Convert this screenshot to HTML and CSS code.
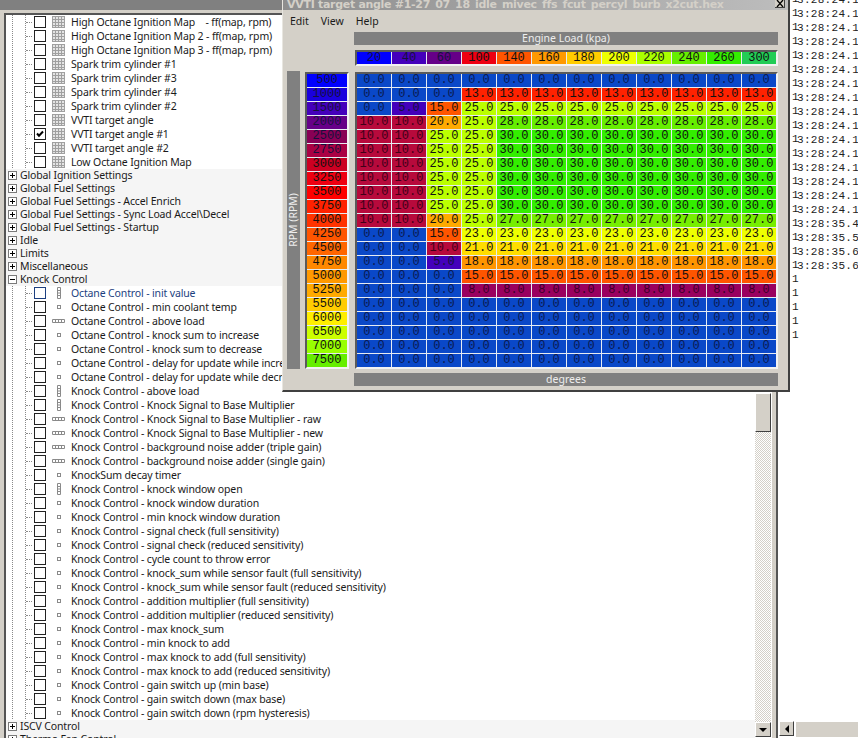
FILE: index.html
```html
<!DOCTYPE html>
<html lang="en">
<head>
<meta charset="utf-8">
<title>VVTI target angle</title>
<link rel="stylesheet" href="styles.css">
</head>
<body>
<svg class="defs" width="0" height="0">
  <symbol id="grid" viewBox="0 0 13 12"><rect width="13" height="12" fill="#e4e4e4"/><path d="M0 .5H13M0 3.5H13M0 6.5H13M0 9.5H13M0 11.5H13M.5 0V12M3.5 0V12M6.5 0V12M9.5 0V12M12.5 0V12" stroke="#a0a0a0" fill="none"/></symbol>
  <symbol id="one" viewBox="0 0 13 12"><rect x="5.5" y="4.5" width="3" height="3" fill="#fff" stroke="#8a8a8a"/></symbol>
  <symbol id="ver" viewBox="0 0 13 12"><path d="M5.5 .5h3v11h-3zM5.5 3.5h3M5.5 6h3M5.5 8.5h3" fill="#fff" stroke="#8a8a8a"/></symbol>
  <symbol id="hor" viewBox="0 0 13 12"><path d="M.5 4.5h12v3H.5zM3.5 4.5v3M6.5 4.5v3M9.5 4.5v3" fill="#fff" stroke="#8a8a8a"/></symbol>
  <symbol id="plus" viewBox="0 0 9 9"><rect x=".5" y=".5" width="8" height="8" fill="#fff" stroke="#7a7a7a"/><path d="M2 4.5h5M4.5 2v5" stroke="#000"/></symbol>
  <symbol id="minus" viewBox="0 0 9 9"><rect x=".5" y=".5" width="8" height="8" fill="#fff" stroke="#7a7a7a"/><path d="M2 4.5h5" stroke="#000"/></symbol>
</svg>

<div class="app">
  <section class="left">
    <div class="left-head"></div>
    <div class="left-body">
      <ul class="tree">
        <li class="item"><i class="branch"></i><span class="chk"></span><svg class="ico"><use href="#grid"/></svg><span class="lbl">High Octane Ignition Map    - ff(map, rpm)</span></li>
        <li class="item"><i class="branch"></i><span class="chk"></span><svg class="ico"><use href="#grid"/></svg><span class="lbl">High Octane Ignition Map 2 - ff(map, rpm)</span></li>
        <li class="item"><i class="branch"></i><span class="chk"></span><svg class="ico"><use href="#grid"/></svg><span class="lbl">High Octane Ignition Map 3 - ff(map, rpm)</span></li>
        <li class="item"><i class="branch"></i><span class="chk"></span><svg class="ico"><use href="#grid"/></svg><span class="lbl">Spark trim cylinder #1</span></li>
        <li class="item"><i class="branch"></i><span class="chk"></span><svg class="ico"><use href="#grid"/></svg><span class="lbl">Spark trim cylinder #3</span></li>
        <li class="item"><i class="branch"></i><span class="chk"></span><svg class="ico"><use href="#grid"/></svg><span class="lbl">Spark trim cylinder #4</span></li>
        <li class="item"><i class="branch"></i><span class="chk"></span><svg class="ico"><use href="#grid"/></svg><span class="lbl">Spark trim cylinder #2</span></li>
        <li class="item"><i class="branch"></i><span class="chk"></span><svg class="ico"><use href="#grid"/></svg><span class="lbl">VVTI target angle</span></li>
        <li class="item"><i class="branch"></i><span class="chk on"><svg class="tick" viewBox="0 0 10 10"><path d="M2 4.5l2 2.2L8 2.5" fill="none" stroke="#000" stroke-width="2"/></svg></span><svg class="ico"><use href="#grid"/></svg><span class="lbl">VVTI target angle #1</span></li>
        <li class="item"><i class="branch"></i><span class="chk"></span><svg class="ico"><use href="#grid"/></svg><span class="lbl">VVTI target angle #2</span></li>
        <li class="item"><i class="branch"></i><span class="chk"></span><svg class="ico"><use href="#grid"/></svg><span class="lbl">Low Octane Ignition Map</span></li>

        <li class="cat"><svg class="exp"><use href="#plus"/></svg><span class="lbl">Global Ignition Settings</span></li>
        <li class="cat"><svg class="exp"><use href="#plus"/></svg><span class="lbl">Global Fuel Settings</span></li>
        <li class="cat"><svg class="exp"><use href="#plus"/></svg><span class="lbl">Global Fuel Settings - Accel Enrich</span></li>
        <li class="cat"><svg class="exp"><use href="#plus"/></svg><span class="lbl">Global Fuel Settings - Sync Load Accel\Decel</span></li>
        <li class="cat"><svg class="exp"><use href="#plus"/></svg><span class="lbl">Global Fuel Settings - Startup</span></li>
        <li class="cat"><svg class="exp"><use href="#plus"/></svg><span class="lbl">Idle</span></li>
        <li class="cat"><svg class="exp"><use href="#plus"/></svg><span class="lbl">Limits</span></li>
        <li class="cat"><svg class="exp"><use href="#plus"/></svg><span class="lbl">Miscellaneous</span></li>
        <li class="cat"><svg class="exp"><use href="#minus"/></svg><span class="lbl">Knock Control</span></li>

        <li class="item hot"><i class="branch"></i><span class="chk"></span><svg class="ico"><use href="#ver"/></svg><span class="lbl">Octane Control - init value</span></li>
        <li class="item"><i class="branch"></i><span class="chk"></span><svg class="ico"><use href="#one"/></svg><span class="lbl">Octane Control - min coolant temp</span></li>
        <li class="item"><i class="branch"></i><span class="chk"></span><svg class="ico"><use href="#hor"/></svg><span class="lbl">Octane Control - above load</span></li>
        <li class="item"><i class="branch"></i><span class="chk"></span><svg class="ico"><use href="#one"/></svg><span class="lbl">Octane Control - knock sum to increase</span></li>
        <li class="item"><i class="branch"></i><span class="chk"></span><svg class="ico"><use href="#one"/></svg><span class="lbl">Octane Control - knock sum to decrease</span></li>
        <li class="item"><i class="branch"></i><span class="chk"></span><svg class="ico"><use href="#one"/></svg><span class="lbl">Octane Control - delay for update while increasing</span></li>
        <li class="item"><i class="branch"></i><span class="chk"></span><svg class="ico"><use href="#one"/></svg><span class="lbl">Octane Control - delay for update while decreasing</span></li>
        <li class="item"><i class="branch"></i><span class="chk"></span><svg class="ico"><use href="#ver"/></svg><span class="lbl">Knock Control - above load</span></li>
        <li class="item"><i class="branch"></i><span class="chk"></span><svg class="ico"><use href="#ver"/></svg><span class="lbl">Knock Control - Knock Signal to Base Multiplier</span></li>
        <li class="item"><i class="branch"></i><span class="chk"></span><svg class="ico"><use href="#hor"/></svg><span class="lbl">Knock Control - Knock Signal to Base Multiplier - raw</span></li>
        <li class="item"><i class="branch"></i><span class="chk"></span><svg class="ico"><use href="#hor"/></svg><span class="lbl">Knock Control - Knock Signal to Base Multiplier - new</span></li>
        <li class="item"><i class="branch"></i><span class="chk"></span><svg class="ico"><use href="#hor"/></svg><span class="lbl">Knock Control - background noise adder (triple gain)</span></li>
        <li class="item"><i class="branch"></i><span class="chk"></span><svg class="ico"><use href="#hor"/></svg><span class="lbl">Knock Control - background noise adder (single gain)</span></li>
        <li class="item"><i class="branch"></i><span class="chk"></span><svg class="ico"><use href="#one"/></svg><span class="lbl">KnockSum decay timer</span></li>
        <li class="item"><i class="branch"></i><span class="chk"></span><svg class="ico"><use href="#ver"/></svg><span class="lbl">Knock Control - knock window open</span></li>
        <li class="item"><i class="branch"></i><span class="chk"></span><svg class="ico"><use href="#one"/></svg><span class="lbl">Knock Control - knock window duration</span></li>
        <li class="item"><i class="branch"></i><span class="chk"></span><svg class="ico"><use href="#one"/></svg><span class="lbl">Knock Control - min knock window duration</span></li>
        <li class="item"><i class="branch"></i><span class="chk"></span><svg class="ico"><use href="#one"/></svg><span class="lbl">Knock Control - signal check (full sensitivity)</span></li>
        <li class="item"><i class="branch"></i><span class="chk"></span><svg class="ico"><use href="#one"/></svg><span class="lbl">Knock Control - signal check (reduced sensitivity)</span></li>
        <li class="item"><i class="branch"></i><span class="chk"></span><svg class="ico"><use href="#one"/></svg><span class="lbl">Knock Control - cycle count to throw error</span></li>
        <li class="item"><i class="branch"></i><span class="chk"></span><svg class="ico"><use href="#one"/></svg><span class="lbl">Knock Control - knock_sum while sensor fault (full sensitivity)</span></li>
        <li class="item"><i class="branch"></i><span class="chk"></span><svg class="ico"><use href="#one"/></svg><span class="lbl">Knock Control - knock_sum while sensor fault (reduced sensitivity)</span></li>
        <li class="item"><i class="branch"></i><span class="chk"></span><svg class="ico"><use href="#one"/></svg><span class="lbl">Knock Control - addition multiplier (full sensitivity)</span></li>
        <li class="item"><i class="branch"></i><span class="chk"></span><svg class="ico"><use href="#one"/></svg><span class="lbl">Knock Control - addition multiplier (reduced sensitivity)</span></li>
        <li class="item"><i class="branch"></i><span class="chk"></span><svg class="ico"><use href="#one"/></svg><span class="lbl">Knock Control - max knock_sum</span></li>
        <li class="item"><i class="branch"></i><span class="chk"></span><svg class="ico"><use href="#one"/></svg><span class="lbl">Knock Control - min knock to add</span></li>
        <li class="item"><i class="branch"></i><span class="chk"></span><svg class="ico"><use href="#one"/></svg><span class="lbl">Knock Control - max knock to add (full sensitivity)</span></li>
        <li class="item"><i class="branch"></i><span class="chk"></span><svg class="ico"><use href="#one"/></svg><span class="lbl">Knock Control - max knock to add (reduced sensitivity)</span></li>
        <li class="item"><i class="branch"></i><span class="chk"></span><svg class="ico"><use href="#one"/></svg><span class="lbl">Knock Control - gain switch up (min base)</span></li>
        <li class="item"><i class="branch"></i><span class="chk"></span><svg class="ico"><use href="#one"/></svg><span class="lbl">Knock Control - gain switch down (max base)</span></li>
        <li class="item"><i class="branch"></i><span class="chk"></span><svg class="ico"><use href="#one"/></svg><span class="lbl">Knock Control - gain switch down (rpm hysteresis)</span></li>

        <li class="cat"><svg class="exp"><use href="#plus"/></svg><span class="lbl">ISCV Control</span></li>
        <li class="cat"><svg class="exp"><use href="#plus"/></svg><span class="lbl">Thermo Fan Control</span></li>
      </ul>
      <div class="vscroll">
        <div class="thumb"></div>
        <div class="track"></div>
        <div class="sbtn"><span class="arrow-down"></span></div>
      </div>
    </div>
  </section>

  <div class="splitter"></div>

  <section class="log">
    <div class="log-lines">
      <div class="ln"><span class="one">1</span>3:28:24.1</div>
      <div class="ln"><span class="one">1</span>3:28:24.1</div>
      <div class="ln"><span class="one">1</span>3:28:24.1</div>
      <div class="ln"><span class="one">1</span>3:28:24.1</div>
      <div class="ln"><span class="one">1</span>3:28:24.1</div>
      <div class="ln"><span class="one">1</span>3:28:24.1</div>
      <div class="ln"><span class="one">1</span>3:28:24.1</div>
      <div class="ln"><span class="one">1</span>3:28:24.1</div>
      <div class="ln"><span class="one">1</span>3:28:24.1</div>
      <div class="ln"><span class="one">1</span>3:28:24.1</div>
      <div class="ln"><span class="one">1</span>3:28:24.1</div>
      <div class="ln"><span class="one">1</span>3:28:24.1</div>
      <div class="ln"><span class="one">1</span>3:28:24.1</div>
      <div class="ln"><span class="one">1</span>3:28:24.1</div>
      <div class="ln"><span class="one">1</span>3:28:24.1</div>
      <div class="ln"><span class="one">1</span>3:28:24.1</div>
      <div class="ln"><span class="one">1</span>3:28:35.4</div>
      <div class="ln"><span class="one">1</span>3:28:35.5</div>
      <div class="ln"><span class="one">1</span>3:28:35.6</div>
      <div class="ln"><span class="one">1</span>3:28:35.6</div>
      <div class="ln"><span class="one">1</span></div>
      <div class="ln"><span class="one">1</span></div>
      <div class="ln"><span class="one">1</span></div>
      <div class="ln"><span class="one">1</span></div>
      <div class="ln"><span class="one">1</span></div>
    </div>
    <div class="hscroll">
      <div class="sbtn hbtn"><span class="arrow-left"></span></div>
      <div class="htrack"></div>
    </div>
  </section>
</div>

<div class="win">
  <div class="win-title">
    <span class="win-name">VVTI target angle #1-27_07_18_idle_mivec_ffs_fcut_percyl_burb_x2cut.hex</span>
    <span class="win-close"><svg viewBox="0 0 8 7" width="8" height="7"><path d="M1 0l6 7M7 0L1 7" stroke="#000" stroke-width="1.3"/></svg></span>
  </div>
  <nav class="menu"><span>Edit</span><span>View</span><span>Help</span></nav>
  <div class="win-body">
    <div class="bar title-x">Engine Load (kpa)</div>
    <div class="panel xaxis">
      <span class="x1 dk">20</span><span class="x2 dk">40</span><span class="x3 dk">60</span><span class="x4">100</span><span class="x5">140</span><span class="x6">160</span><span class="x7">180</span><span class="x8">200</span><span class="x9">220</span><span class="x10">240</span><span class="x11">260</span><span class="x12">300</span>
    </div>
    <div class="bar title-y"><span>RPM (RPM)</span></div>
    <div class="panel yaxis">
      <span class="r1 dk">500</span><span class="r2 dk">1000</span><span class="r3 dk">1500</span><span class="r4 dk">2000</span><span class="r5 dk">2500</span><span class="r6 dk">2750</span><span class="r7">3000</span><span class="r8">3250</span><span class="r9">3500</span><span class="r10">3750</span><span class="r11">4000</span><span class="r12">4250</span><span class="r13">4500</span><span class="r14">4750</span><span class="r15">5000</span><span class="r16">5250</span><span class="r17">5500</span><span class="r18">6000</span><span class="r19">6500</span><span class="r20">7000</span><span class="r21">7500</span>
    </div>
    <div class="panel cells">
      <span class="c0">0.0</span><span class="c0">0.0</span><span class="c0">0.0</span><span class="c0">0.0</span><span class="c0">0.0</span><span class="c0">0.0</span><span class="c0">0.0</span><span class="c0">0.0</span><span class="c0">0.0</span><span class="c0">0.0</span><span class="c0">0.0</span><span class="c0">0.0</span>
      <span class="c0">0.0</span><span class="c0">0.0</span><span class="c0">0.0</span><span class="c13">13.0</span><span class="c13">13.0</span><span class="c13">13.0</span><span class="c13">13.0</span><span class="c13">13.0</span><span class="c13">13.0</span><span class="c13">13.0</span><span class="c13">13.0</span><span class="c13">13.0</span>
      <span class="c0">0.0</span><span class="c5">5.0</span><span class="c15">15.0</span><span class="c25">25.0</span><span class="c25">25.0</span><span class="c25">25.0</span><span class="c25">25.0</span><span class="c25">25.0</span><span class="c25">25.0</span><span class="c25">25.0</span><span class="c25">25.0</span><span class="c25">25.0</span>
      <span class="c10">10.0</span><span class="c10">10.0</span><span class="c20">20.0</span><span class="c25">25.0</span><span class="c28">28.0</span><span class="c28">28.0</span><span class="c28">28.0</span><span class="c28">28.0</span><span class="c28">28.0</span><span class="c28">28.0</span><span class="c28">28.0</span><span class="c28">28.0</span>
      <span class="c10">10.0</span><span class="c10">10.0</span><span class="c25">25.0</span><span class="c25">25.0</span><span class="c30">30.0</span><span class="c30">30.0</span><span class="c30">30.0</span><span class="c30">30.0</span><span class="c30">30.0</span><span class="c30">30.0</span><span class="c30">30.0</span><span class="c30">30.0</span>
      <span class="c10">10.0</span><span class="c10">10.0</span><span class="c25">25.0</span><span class="c25">25.0</span><span class="c30">30.0</span><span class="c30">30.0</span><span class="c30">30.0</span><span class="c30">30.0</span><span class="c30">30.0</span><span class="c30">30.0</span><span class="c30">30.0</span><span class="c30">30.0</span>
      <span class="c10">10.0</span><span class="c10">10.0</span><span class="c25">25.0</span><span class="c25">25.0</span><span class="c30">30.0</span><span class="c30">30.0</span><span class="c30">30.0</span><span class="c30">30.0</span><span class="c30">30.0</span><span class="c30">30.0</span><span class="c30">30.0</span><span class="c30">30.0</span>
      <span class="c10">10.0</span><span class="c10">10.0</span><span class="c25">25.0</span><span class="c25">25.0</span><span class="c30">30.0</span><span class="c30">30.0</span><span class="c30">30.0</span><span class="c30">30.0</span><span class="c30">30.0</span><span class="c30">30.0</span><span class="c30">30.0</span><span class="c30">30.0</span>
      <span class="c10">10.0</span><span class="c10">10.0</span><span class="c25">25.0</span><span class="c25">25.0</span><span class="c30">30.0</span><span class="c30">30.0</span><span class="c30">30.0</span><span class="c30">30.0</span><span class="c30">30.0</span><span class="c30">30.0</span><span class="c30">30.0</span><span class="c30">30.0</span>
      <span class="c10">10.0</span><span class="c10">10.0</span><span class="c25">25.0</span><span class="c25">25.0</span><span class="c30">30.0</span><span class="c30">30.0</span><span class="c30">30.0</span><span class="c30">30.0</span><span class="c30">30.0</span><span class="c30">30.0</span><span class="c30">30.0</span><span class="c30">30.0</span>
      <span class="c10">10.0</span><span class="c10">10.0</span><span class="c20">20.0</span><span class="c25">25.0</span><span class="c27">27.0</span><span class="c27">27.0</span><span class="c27">27.0</span><span class="c27">27.0</span><span class="c27">27.0</span><span class="c27">27.0</span><span class="c27">27.0</span><span class="c27">27.0</span>
      <span class="c0">0.0</span><span class="c0">0.0</span><span class="c15">15.0</span><span class="c23">23.0</span><span class="c23">23.0</span><span class="c23">23.0</span><span class="c23">23.0</span><span class="c23">23.0</span><span class="c23">23.0</span><span class="c23">23.0</span><span class="c23">23.0</span><span class="c23">23.0</span>
      <span class="c0">0.0</span><span class="c0">0.0</span><span class="c10">10.0</span><span class="c21">21.0</span><span class="c21">21.0</span><span class="c21">21.0</span><span class="c21">21.0</span><span class="c21">21.0</span><span class="c21">21.0</span><span class="c21">21.0</span><span class="c21">21.0</span><span class="c21">21.0</span>
      <span class="c0">0.0</span><span class="c0">0.0</span><span class="c5">5.0</span><span class="c18">18.0</span><span class="c18">18.0</span><span class="c18">18.0</span><span class="c18">18.0</span><span class="c18">18.0</span><span class="c18">18.0</span><span class="c18">18.0</span><span class="c18">18.0</span><span class="c18">18.0</span>
      <span class="c0">0.0</span><span class="c0">0.0</span><span class="c0">0.0</span><span class="c15">15.0</span><span class="c15">15.0</span><span class="c15">15.0</span><span class="c15">15.0</span><span class="c15">15.0</span><span class="c15">15.0</span><span class="c15">15.0</span><span class="c15">15.0</span><span class="c15">15.0</span>
      <span class="c0">0.0</span><span class="c0">0.0</span><span class="c0">0.0</span><span class="c8">8.0</span><span class="c8">8.0</span><span class="c8">8.0</span><span class="c8">8.0</span><span class="c8">8.0</span><span class="c8">8.0</span><span class="c8">8.0</span><span class="c8">8.0</span><span class="c8">8.0</span>
      <span class="c0">0.0</span><span class="c0">0.0</span><span class="c0">0.0</span><span class="c0">0.0</span><span class="c0">0.0</span><span class="c0">0.0</span><span class="c0">0.0</span><span class="c0">0.0</span><span class="c0">0.0</span><span class="c0">0.0</span><span class="c0">0.0</span><span class="c0">0.0</span>
      <span class="c0">0.0</span><span class="c0">0.0</span><span class="c0">0.0</span><span class="c0">0.0</span><span class="c0">0.0</span><span class="c0">0.0</span><span class="c0">0.0</span><span class="c0">0.0</span><span class="c0">0.0</span><span class="c0">0.0</span><span class="c0">0.0</span><span class="c0">0.0</span>
      <span class="c0">0.0</span><span class="c0">0.0</span><span class="c0">0.0</span><span class="c0">0.0</span><span class="c0">0.0</span><span class="c0">0.0</span><span class="c0">0.0</span><span class="c0">0.0</span><span class="c0">0.0</span><span class="c0">0.0</span><span class="c0">0.0</span><span class="c0">0.0</span>
      <span class="c0">0.0</span><span class="c0">0.0</span><span class="c0">0.0</span><span class="c0">0.0</span><span class="c0">0.0</span><span class="c0">0.0</span><span class="c0">0.0</span><span class="c0">0.0</span><span class="c0">0.0</span><span class="c0">0.0</span><span class="c0">0.0</span><span class="c0">0.0</span>
      <span class="c0">0.0</span><span class="c0">0.0</span><span class="c0">0.0</span><span class="c0">0.0</span><span class="c0">0.0</span><span class="c0">0.0</span><span class="c0">0.0</span><span class="c0">0.0</span><span class="c0">0.0</span><span class="c0">0.0</span><span class="c0">0.0</span><span class="c0">0.0</span>
    </div>
    <div class="bar title-z">degrees</div>
  </div>
</div>
</body>
</html>
```
FILE: styles.css
```css
* { box-sizing: border-box; }
html, body { margin: 0; padding: 0; }
body {
  width: 858px;
  height: 738px;
  overflow: hidden;
  position: relative;
  background: #fff;
  font-family: "Noto Sans", "Open Sans", sans-serif;
  font-size: 10.5px;
  color: #1a1a1a;
}
.defs { position: absolute; }
.app { display: flex; width: 858px; height: 738px; background: #fff; }

/* left pane */
.left { width: 772px; display: flex; flex-direction: column; background: #d4d0c8; flex: none; }
.left-head { height: 10px; background: #808080; flex: none; margin-bottom: 3px; }
.left-body {
  flex: 1;
  min-height: 0;
  display: flex;
  margin-left: 4px;
  border-top: 2px solid #555;
  border-left: 2px solid #555;
  background: #fff;
}
.tree { list-style: none; margin: 0; padding: 0; flex: 1; min-width: 0; overflow: hidden; }
.item, .cat { display: flex; align-items: center; white-space: pre; }
.item {
  height: 14px;
  padding-left: 20px;
  background:
    linear-gradient(#8a8a8a 50%, transparent 50%) 6px 0 / 1px 2px repeat-y,
    linear-gradient(#8a8a8a 50%, transparent 50%) 19px 0 / 1px 2px repeat-y;
}
.cat { height: 13px; padding-left: 2px; padding-bottom: 1px; background: #f5f5f5; }
.cat .exp { margin-top: 1px; }
.branch { display: block; width: 6px; border-top: 1px dotted #8a8a8a; margin-right: 2px; flex: none; }
.chk { width: 12px; height: 12px; border: 1px solid #222; background: #fff; flex: none; display: flex; }
.tick { width: 10px; height: 10px; }
.ico { width: 13px; height: 12px; margin: 0 6px; flex: none; }
.exp { width: 9px; height: 9px; margin-right: 3px; flex: none; }
.lbl { line-height: 14px; letter-spacing: -0.14px; }
.hot .lbl { color: #1c3f80; }
.hot .chk { border-color: #1c3f80; }

/* scrollbars */
.vscroll { width: 16px; flex: none; display: flex; flex-direction: column; padding-top: 378px; padding-bottom: 1px; margin-right: 1px; }
.thumb {
  height: 39px;
  flex: none;
  background: #d4d0c8;
  border: 1px solid;
  border-color: #fff #404040 #404040 #fff;
}
.track {
  flex: 1;
  background: conic-gradient(#d4d0c8 25%, #fff 0 50%, #d4d0c8 0 75%, #fff 0) 0 0 / 2px 2px;
}
.sbtn {
  width: 16px;
  height: 15px;
  flex: none;
  display: flex;
  align-items: center;
  justify-content: center;
  background: #d4d0c8;
  border: 1px solid;
  border-color: #fff #404040 #404040 #fff;
}
.arrow-down { border: 4px solid transparent; border-top-color: #000; border-bottom-width: 0; }
.arrow-left { border: 4px solid transparent; border-right-color: #000; border-left-width: 0; }
.splitter { width: 6px; flex: none; background: #d4d0c8; border-right: 2px solid #555; }

/* log pane */
.log { flex: 1; min-width: 0; display: flex; flex-direction: column; background: #fff; }
.log-lines {
  flex: 1;
  min-height: 0;
  overflow: hidden;
  padding-left: 14px;
  margin-top: -8px;
  font-family: "Liberation Mono", monospace;
  font-size: 11px;
  letter-spacing: 0.3px;
  color: #222;
}
.ln { height: 14px; line-height: 14px; white-space: nowrap; }
.one { display: inline-block; width: 5px; vertical-align: 1px; letter-spacing: -2px; }
.hscroll { height: 16px; flex: none; display: flex; margin-left: 1px; margin-bottom: 1px; }
.hbtn { width: 15px; }
.htrack { flex: 1; background: #d4d0c8; border-top: 1px solid #fff; margin-left: 2px; }

/* floating window */
.win {
  position: absolute;
  left: 282px;
  top: 0;
  width: 508px;
  height: 392px;
  background: #d4d0c8;
  border: 1px solid #e8e6e0;
  border-top: 0;
  border-right: 2px solid #404040;
  border-bottom: 2px solid #404040;
}
.win-title {
  height: 10px;
  overflow: hidden;
  display: flex;
  justify-content: space-between;
  padding: 0 3px 0 4px;
  background: linear-gradient(90deg, #8e8e8e, #bdbdbd);
}
.win-name {
  font-family: "DejaVu Sans", sans-serif;
  font-weight: bold;
  font-size: 11px;
  line-height: 9px;
  color: #d4d0c8;
  white-space: nowrap;
  letter-spacing: -0.3px;
}
.win-close {
  width: 10px;
  height: 8px;
  display: flex;
  align-items: center;
  justify-content: center;
  background: #d4d0c8;
  border-right: 1px solid #404040;
  border-bottom: 1px solid #404040;
}
.menu { height: 22px; display: flex; align-items: center; padding-left: 7px; gap: 12px; }
.win-body {
  display: grid;
  grid-template-columns: 18px 49px 424px;
  padding-left: 4px;
}
.bar {
  background: #808080;
  color: #eee;
  display: flex;
  align-items: center;
  justify-content: center;
  line-height: 13px;
}
.panel {
  border: 2px solid;
  border-color: #5a5a5a #f2f2f2 #f2f2f2 #5a5a5a;
  background: #e6ebf2;
  font-family: "Liberation Mono", monospace;
  font-size: 12px;
  color: #111;
  text-align: center;
  display: grid;
}
.panel span { display: block; line-height: 13px; }
.panel .dk { color: #15103c; }
.title-x { grid-column: 3; grid-row: 1; height: 13px; }
.xaxis {
  grid-column: 3;
  grid-row: 2;
  margin: 5px 0 6px 1px;
  width: 423px;
  grid-template-columns: repeat(12, 34px);
  grid-auto-rows: 12px;
  column-gap: 1px;
}
.xaxis span { line-height: 12px; }
.title-y {
  grid-column: 1;
  grid-row: 3;
  width: 13px;
  height: 298px;
  margin-top: -1px;
}
.title-y span { writing-mode: vertical-rl; transform: rotate(180deg); }
.yaxis {
  grid-column: 2;
  grid-row: 3;
  width: 44px;
  height: 297px;
  grid-template-columns: 40px;
  grid-auto-rows: 13px;
  row-gap: 1px;
}
.cells {
  grid-column: 3;
  grid-row: 3;
  margin-left: 1px;
  width: 423px;
  height: 297px;
  grid-template-columns: repeat(12, 34px);
  grid-auto-rows: 13px;
  gap: 1px;
}
.title-z { grid-column: 3; grid-row: 4; height: 13px; margin-top: 4px; }

/* column axis colours */
.x1 { background: #0000ff; } .x2 { background: #4400bb; } .x3 { background: #660088; }
.x4 { background: #ee0011; } .x5 { background: #ff5500; } .x6 { background: #ff9900; }
.x7 { background: #ffcc00; } .x8 { background: #eeff00; } .x9 { background: #aaff00; }
.x10 { background: #66ee00; } .x11 { background: #33ee00; } .x12 { background: #22cc55; }

/* row axis colours */
.r1 { background: #0000ff; } .r2 { background: #1a00dd; } .r3 { background: #4400bb; }
.r4 { background: #660088; } .r5 { background: #880055; } .r6 { background: #aa0044; }
.r7 { background: #cc0022; } .r8 { background: #ee0011; } .r9 { background: #ff0000; }
.r10 { background: #ff2200; } .r11 { background: #ff3300; } .r12 { background: #ff5500; }
.r13 { background: #ff6600; } .r14 { background: #ff8800; } .r15 { background: #ff9900; }
.r16 { background: #ffaa00; } .r17 { background: #ffcc00; } .r18 { background: #ffee00; }
.r19 { background: #ccff00; } .r20 { background: #99ff00; } .r21 { background: #66ee00; }

/* value colours */
.panel .c0 { background: #0a48c8; color: #0a1a50; }
.panel .c5 { background: #4400bb; color: #15103c; }
.panel .c8 { background: #99005f; color: #3a0028; }
.panel .c10 { background: #b70a3c; color: #400018; }
.c13 { background: #ff2200; } .c15 { background: #ff5500; }
.c18 { background: #ff9500; } .c20 { background: #ffaa00; } .c21 { background: #ffdd00; }
.c23 { background: #eeff00; } .c25 { background: #bbff00; } .c27 { background: #77ee00; }
.c28 { background: #66ee00; } .c30 { background: #33ee00; }
```
